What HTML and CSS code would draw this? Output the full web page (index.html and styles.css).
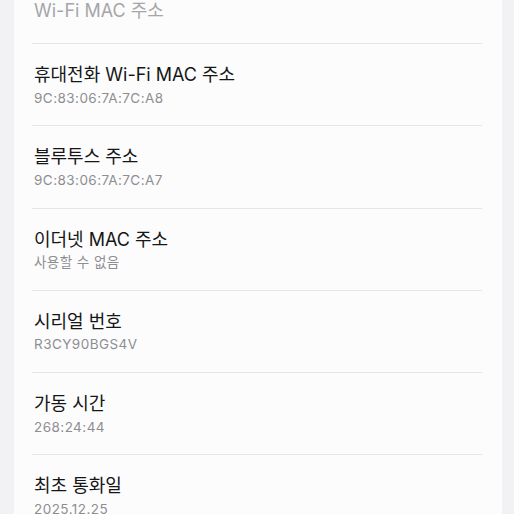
FILE: index.html
```html
<!DOCTYPE html>
<html lang="ko">
<head>
<meta charset="utf-8">
<link rel="stylesheet" href="styles.css">
</head>
<body>
<div class="page">
  <div class="card">
    <div class="row row-first">
      <div class="title faded">Wi-Fi MAC 주소</div>
    </div>
    <div class="row">
      <div class="title">휴대전화 Wi-Fi MAC 주소</div>
      <div class="sub">9C:83:06:7A:7C:A8</div>
    </div>
    <div class="row">
      <div class="title">블루투스 주소</div>
      <div class="sub">9C:83:06:7A:7C:A7</div>
    </div>
    <div class="row">
      <div class="title">이더넷 MAC 주소</div>
      <div class="sub">사용할 수 없음</div>
    </div>
    <div class="row">
      <div class="title">시리얼 번호</div>
      <div class="sub">R3CY90BGS4V</div>
    </div>
    <div class="row">
      <div class="title">가동 시간</div>
      <div class="sub">268:24:44</div>
    </div>
    <div class="row">
      <div class="title">최초 통화일</div>
      <div class="sub">2025.12.25</div>
    </div>
  </div>
</div>
</body>
</html>
```

FILE: styles.css
```css
html, body {
  margin: 0;
  padding: 0;
  height: 514px;
  overflow: hidden;
  background: #f2f2f4;
}

.page {
  padding: 0 12px 0 14px;
  font-family: "Inter", "Noto Sans CJK KR", sans-serif;
}

.card {
  background: #fcfcfd;
  margin-top: -20.5px;
  padding-bottom: 40px;
}

.row {
  margin: 0 20px 0 18px;
  padding: 19px 0 18.75px 2px;
  border-bottom: 1px solid #e5e5e7;
}

.row-first {
  padding-bottom: 20.5px;
}

.title {
  font-size: 18px;
  line-height: 24px;
  color: #161616;
}

.title.faded {
  color: #a6a6a8;
}

.sub {
  margin-top: 1.5px;
  font-size: 13.5px;
  line-height: 18px;
  letter-spacing: 0.45px;
  color: #8e8e91;
}
```
